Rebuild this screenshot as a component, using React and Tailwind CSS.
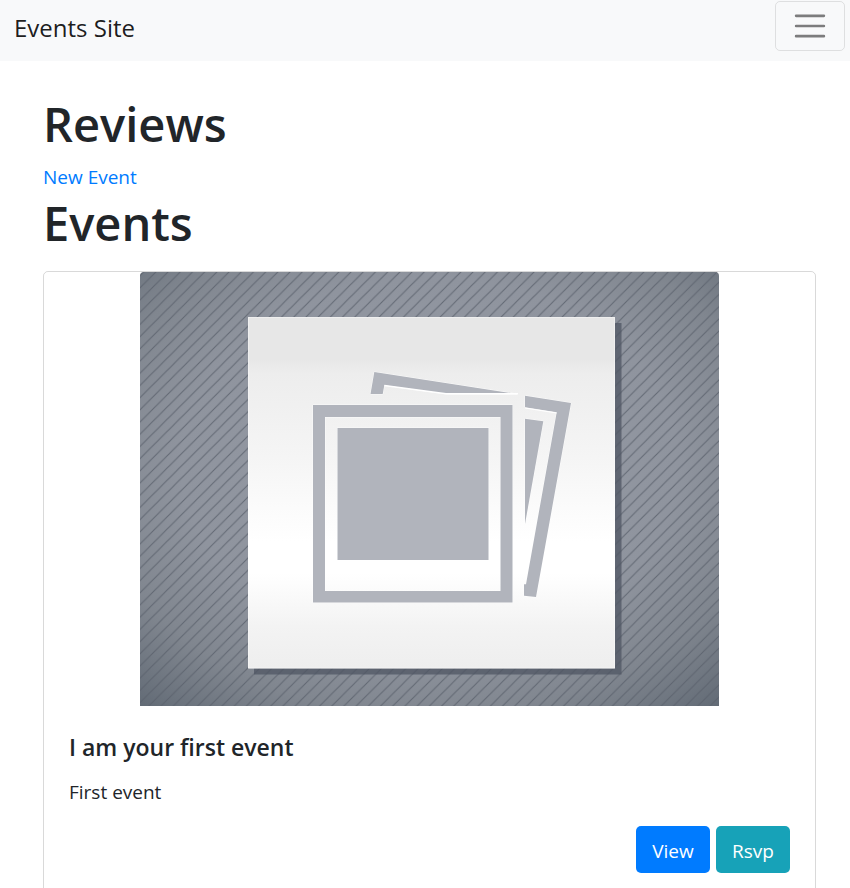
function PlaceholderPhoto() {
  return (
    <svg
      viewBox="0 0 579 434"
      role="img"
      aria-label="Event photo placeholder"
      className="mx-auto block w-[75.1%] rounded-t"
    >
      <defs>
        <radialGradient id="backdrop" cx="0.5" cy="0.44" r="0.78">
          <stop offset="0" stopColor="#959aa5" />
          <stop offset="0.55" stopColor="#8f949e" />
          <stop offset="0.75" stopColor="#80868f" />
          <stop offset="1" stopColor="#5d6671" />
        </radialGradient>
        <pattern id="stripes" width="12.2" height="12.2" patternUnits="userSpaceOnUse" patternTransform="translate(3.6 0)">
          <path d="M-2 14.2L14.2 -2M-2 2L2 -2M10.2 14.2L14.2 10.2" stroke="#59606b" strokeWidth="1.1" />
        </pattern>
        <linearGradient id="paper" x1="0" y1="0" x2="0" y2="1">
          <stop offset="0" stopColor="#e7e7e7" />
          <stop offset="0.12" stopColor="#e7e7e7" />
          <stop offset="0.16" stopColor="#ededed" />
          <stop offset="0.4" stopColor="#f5f5f5" />
          <stop offset="0.64" stopColor="#ffffff" />
          <stop offset="0.73" stopColor="#ffffff" />
          <stop offset="0.88" stopColor="#f3f3f3" />
          <stop offset="1" stopColor="#eeeeee" />
        </linearGradient>
      </defs>
      <rect width="579" height="434" fill="url(#backdrop)" />
      <rect width="579" height="434" fill="url(#stripes)" opacity="0.8" />
      <rect x="114" y="51" width="367.5" height="351.5" fill="#4f5563" opacity="0.75" />
      <rect x="108" y="45" width="367" height="351.5" fill="url(#paper)" />
      <path d="M108.5 396V45.5H474.5V396Z" fill="none" stroke="#ffffff" strokeOpacity="0.35" />
      <g fill="#b1b4bc" stroke="#ffffff" strokeOpacity="0.7" strokeWidth="1" paintOrder="stroke">
        <path d="M234.3 100L230.5 122H242.7L244.3 113.3L306.7 122H377Z" />
        <path d="M385 123.7L431 131L396 325L384 323.7V312.3H386L416.7 140.3L385 135.3Z" />
        <path d="M385 146.7L403.3 149.3L385 252Z" />
        <path fillRule="evenodd" d="M173 133H372.5V330.5H173ZM185 145V319H360.5V145Z" />
        <rect x="197.5" y="156" width="151" height="132" />
      </g>
      <path d="M244.3 113.5L306 121.7H378" fill="none" stroke="#ffffff" strokeWidth="1.4" />
      <path d="M385 136L416.5 141" fill="none" stroke="#ffffff" strokeWidth="1.2" />
    </svg>
  );
}

export default function App() {
  return (
    <div className="min-h-screen bg-white font-['Open_Sans','Noto_Sans',sans-serif] text-[19px] text-[#212529]">
      <nav className="flex items-start justify-between bg-[#f8f9fa] pt-px pr-[5px] pb-[10px] pl-[14px]">
        <a href="#" className="pt-[9px] text-2xl leading-9 text-black/90">
          Events Site
        </a>
        <button
          type="button"
          aria-label="Toggle navigation"
          className="flex h-[50px] w-[70px] items-center justify-center rounded-[5px] border border-black/10"
        >
          <svg viewBox="0 0 30 30" className="size-[38px]" fill="none" stroke="#000000" strokeOpacity="0.5" strokeWidth="2" strokeLinecap="round" strokeMiterlimit="10">
            <path d="M4 7h22M4 15h22M4 23h22" />
          </svg>
        </button>
      </nav>

      <main className="pt-[33px] pr-[34px] pl-[43px]">
        <h1 className="mb-2 text-[47px] leading-[60px] font-semibold">Reviews</h1>
        <a href="#" className="block leading-[31px] text-[#007bff]">
          New Event
        </a>
        <h1 className="mb-[18px] text-[47px] leading-[60px] font-semibold">Events</h1>

        <article className="rounded-[5px] border border-black/15">
          <PlaceholderPhoto />
          <div className="p-[25px]">
            <h2 className="mb-[14px] text-[23px] leading-8 font-semibold">I am your first event</h2>
            <p className="mb-[19px] leading-[30px]">First event</p>
            <div className="flex justify-end gap-[6px] text-white">
              <button type="button" className="h-[47px] w-[74px] rounded-[5px] bg-[#007bff] pt-[3px]">
                View
              </button>
              <button type="button" className="h-[47px] w-[74px] rounded-[5px] bg-[#17a2b8] pt-[3px]">
                Rsvp
              </button>
            </div>
          </div>
        </article>
      </main>
    </div>
  );
}
